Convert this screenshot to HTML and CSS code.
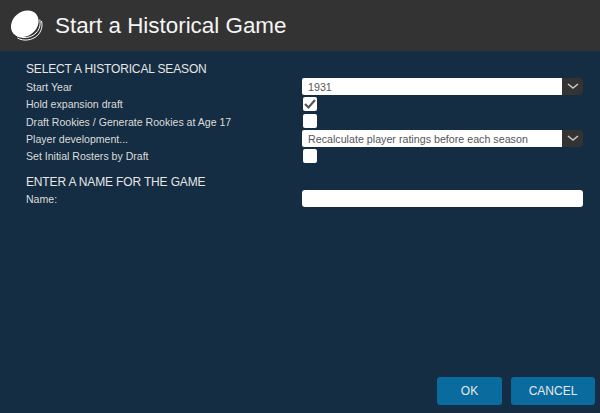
FILE: index.html
```html
<!DOCTYPE html>
<html lang="en">
<head>
<meta charset="utf-8">
<title>Start a Historical Game</title>
<link rel="stylesheet" href="styles.css">
</head>
<body>
<div class="app">
  <header class="header">
    <svg class="logo" width="32" height="32" viewBox="0 0 32 32" aria-hidden="true">
      <ellipse cx="13.800" cy="13.800" rx="15" ry="12" transform="rotate(-40 13.800 13.800)" fill="#fff"/>
      <path d="M6.500 28C12.500 31.500 21 30.500 26.500 25.500C30.500 21.500 31.800 16 30.500 11" fill="none" stroke="#fff" stroke-width="1"/>
      <path d="M5.500 25.500C11.500 29 20 28 25 23C28.500 19.500 29.800 15 28.800 9.500" fill="none" stroke="#fff" stroke-width="1"/>
    </svg>
    <h1 class="title">Start a Historical Game</h1>
  </header>
  <main class="content">
    <h2 class="section-title">SELECT A HISTORICAL SEASON</h2>
    <div class="form-row">
      <label class="form-label">Start Year</label>
      <div class="select"><span class="select-value">1931</span><span class="select-btn"><svg width="12" height="7" viewBox="0 0 12 7"><path d="M1 1l5 4 5-4" fill="none" stroke="#c8c8c8" stroke-width="1.600"/></svg></span></div>
    </div>
    <div class="form-row">
      <label class="form-label">Hold expansion draft</label>
      <span class="checkbox"><svg width="14" height="14" viewBox="0 0 14 14"><path d="M2 7l3.500 3.500L12 3" fill="none" stroke="#555" stroke-width="2.200"/></svg></span>
    </div>
    <div class="form-row">
      <label class="form-label">Draft Rookies / Generate Rookies at Age 17</label>
      <span class="checkbox"></span>
    </div>
    <div class="form-row">
      <label class="form-label">Player development...</label>
      <div class="select"><span class="select-value">Recalculate player ratings before each season</span><span class="select-btn"><svg width="12" height="7" viewBox="0 0 12 7"><path d="M1 1l5 4 5-4" fill="none" stroke="#c8c8c8" stroke-width="1.600"/></svg></span></div>
    </div>
    <div class="form-row">
      <label class="form-label">Set Initial Rosters by Draft</label>
      <span class="checkbox"></span>
    </div>
    <h2 class="section-title section-second">ENTER A NAME FOR THE GAME</h2>
    <div class="form-row">
      <label class="form-label">Name:</label>
      <span class="text-input"></span>
    </div>
  </main>
  <footer class="footer">
    <button class="btn btn-ok">OK</button>
    <button class="btn btn-cancel">CANCEL</button>
  </footer>
</div>
</body>
</html>
```
FILE: styles.css
```css
* { box-sizing: border-box; }
html, body { margin: 0; height: 100%; }
body { background: #152d42; font-family: "Liberation Sans", Arial, sans-serif; color: #e6e6e6; overflow: hidden; }
.app { height: 413px; display: flex; flex-direction: column; }
.header { height: 51px; background: #333; display: flex; align-items: center; padding-left: 11px; gap: 12px; flex: none; }
.logo { flex: none; }
.title { margin: 0; font-size: 22.4px; font-weight: 400; color: #f5f5f5; }
.content { flex: 1; padding: 11px 17px 0 26px; }
.section-title { margin: 0; font-size: 12px; letter-spacing: -0.15px; line-height: 14px; font-weight: 400; color: #e6e6e6; height: 16px; }
.section-second { margin-top: 11px; height: 14px; }
.form-row { display: grid; grid-template-columns: 276px 281px; height: 17.3px; align-items: center; font-size: 10.56px; }
.form-label { color: #dcdcdc; padding-top: 1px; }
.select { display: flex; height: 17px; }
.select-value { flex: 1; background: #fff; color: #555; padding-left: 6px; line-height: 18px; font-size: 10.7px; border-radius: 2px 0 0 2px; }
.select-btn { width: 21px; background: #333; border-radius: 0 4px 4px 0; display: flex; align-items: center; justify-content: center; }
.checkbox { width: 14px; height: 14px; margin-left: 1px; background: #fff; border-radius: 2px; display: flex; align-items: center; justify-content: center; }
.text-input { height: 17px; background: #fff; border-radius: 3px; }
.footer { display: flex; justify-content: flex-end; gap: 9px; padding: 0 5px 8px 0; flex: none; }
.btn { height: 28px; border: 0; border-radius: 3px; background: #0a6b9e; color: #e8e8e8; font: 12px "Liberation Sans", Arial, sans-serif; }
.btn-ok { width: 65px; }
.btn-cancel { width: 84px; }
```
